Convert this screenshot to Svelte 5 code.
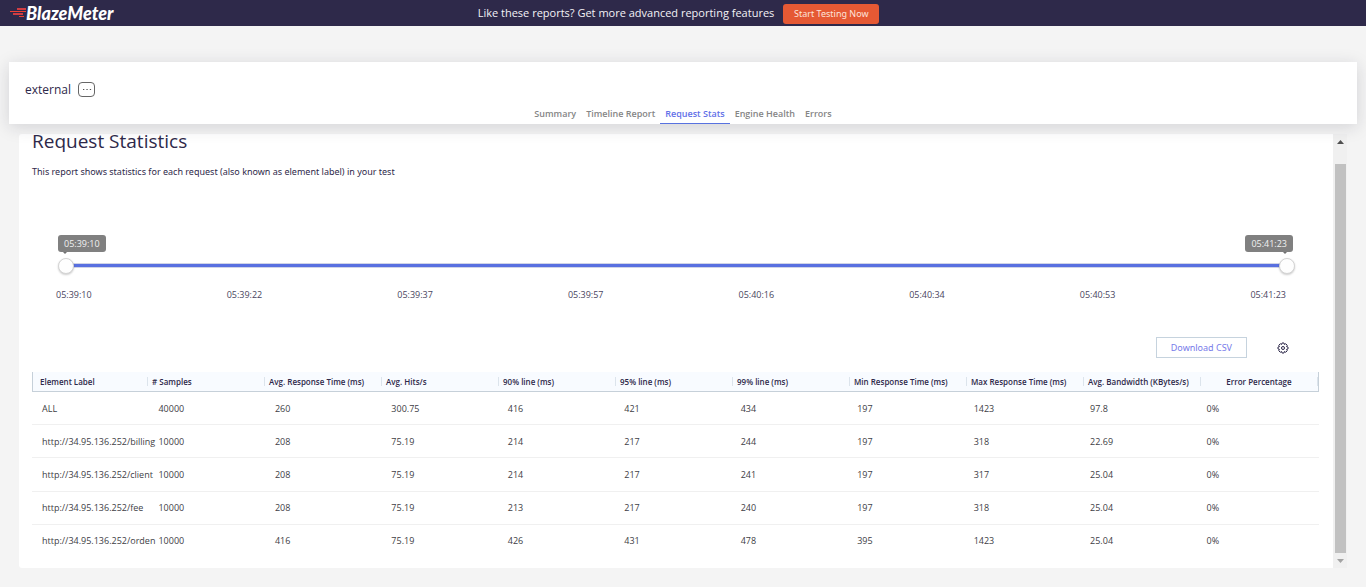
<script>
  const tabs = ['Summary', 'Timeline Report', 'Request Stats', 'Engine Health', 'Errors'];
  let active = $state('Request Stats');

  const times = ['05:39:10', '05:39:22', '05:39:37', '05:39:57', '05:40:16', '05:40:34', '05:40:53', '05:41:23'];
  let from = $state(0);
  let to = $state(133);

  const columns = [
    'Element Label', '# Samples', 'Avg. Response Time (ms)', 'Avg. Hits/s', '90% line (ms)', '95% line (ms)',
    '99% line (ms)', 'Min Response Time (ms)', 'Max Response Time (ms)', 'Avg. Bandwidth (KBytes/s)', 'Error Percentage'
  ];
  const rows = [
    ['ALL', '40000', '260', '300.75', '416', '421', '434', '197', '1423', '97.8', '0%'],
    ['http://34.95.136.252/billing', '10000', '208', '75.19', '214', '217', '244', '197', '318', '22.69', '0%'],
    ['http://34.95.136.252/client', '10000', '208', '75.19', '214', '217', '241', '197', '317', '25.04', '0%'],
    ['http://34.95.136.252/fee', '10000', '208', '75.19', '213', '217', '240', '197', '318', '25.04', '0%'],
    ['http://34.95.136.252/orden', '10000', '416', '75.19', '426', '431', '478', '395', '1423', '25.04', '0%']
  ];
</script>

<header class="topbar">
  <a class="logo" href="#home">
    <svg width="18" height="12" viewBox="0 0 18 12" aria-hidden="true">
      <path d="M7 2h9" />
      <path d="M0 4.500h16" class="thin" />
      <path d="M3 7h10" />
      <path d="M9 9.500h5" class="thin" />
    </svg>
    <span>BlazeMeter</span>
  </a>
  <p>Like these reports? Get more advanced reporting features</p>
  <button class="start">Start Testing Now</button>
</header>

<section class="card">
  <div class="title">
    <span>external</span>
    <button class="more" aria-label="More">
      <svg width="10" height="4" viewBox="0 0 10 4"><path d="M1 1.500h1.300M4.400 1.500h1.300M7.800 1.500h1.300" /></svg>
    </button>
  </div>
  <nav>
    {#each tabs as tab}
      <button class="tab" class:active={tab === active} onclick={() => (active = tab)}>{tab}</button>
    {/each}
  </nav>
</section>

<main>
  <div class="report">
    <h1>Request Statistics</h1>
    <p class="intro">This report shows statistics for each request (also known as element label) in your test</p>

    <div class="slider">
      <div class="tips"><output>05:39:10</output><output>05:41:23</output></div>
      <div class="ranges">
        <div class="track"></div>
        <input type="range" min="0" max="133" bind:value={from} aria-label="Start time" />
        <input type="range" min="0" max="133" bind:value={to} aria-label="End time" />
      </div>
      <div class="times">
        {#each times as time}<span>{time}</span>{/each}
      </div>
    </div>

    <div class="actions">
      <button class="csv">Download CSV</button>
      <button class="gear" aria-label="Table settings">
        <svg width="12" height="12" viewBox="0 0 24 24">
          <path d="M10 2h4l.8 3 2.700-1.500 3 3L19 9.200l3 .8v4l-3 .8 1.500 2.700-3 3-2.700-1.500-.8 3h-4l-.8-3-2.700 1.500-3-3L5 14.800 2 14v-4l3-.8-1.500-2.700 3-3L9.200 5z" />
          <circle cx="12" cy="12" r="3" />
        </svg>
      </button>
    </div>

    <table>
      <thead>
        <tr>{#each columns as column}<th scope="col">{column}</th>{/each}</tr>
      </thead>
      <tbody>
        {#each rows as row}
          <tr>{#each row as cell}<td>{cell}</td>{/each}</tr>
        {/each}
      </tbody>
    </table>
  </div>
  <div class="scrollbar">
    <button aria-label="Scroll up"><svg width="7" height="4" viewBox="0 0 7 4"><path d="M0 4 3.500 0 7 4z" fill="#505050" /></svg></button>
    <div class="thumb"></div>
    <button aria-label="Scroll down"><svg width="7" height="4" viewBox="0 0 7 4"><path d="M0 0h7L3.500 4z" fill="#a3a3a3" /></svg></button>
  </div>
</main>

<style>
  :global(body) {
    background: #f4f4f4;
    color: #2e294a;
    font-family: 'Open Sans', 'Noto Sans', sans-serif;
    font-size: 9px;
  }
  button {
    font: inherit;
    color: inherit;
    padding: 0;
    border: 0;
    background: none;
    cursor: pointer;
  }
  p, h1 { margin: 0; font-weight: 400; }
  svg { display: block; }
  .intro, .start, .csv { font-family: 'Noto Sans', sans-serif; }

  .topbar {
    display: grid;
    grid-template-columns: 1fr auto auto 1fr;
    align-items: center;
    height: 26px;
    padding: 0 19px 0 10px;
    background: #2e294a;
    color: #f3f2f6;
  }
  .topbar p { font-size: 11px; line-height: 26px; }
  .logo {
    display: flex;
    align-items: center;
    color: #fff;
    text-decoration: none;
    font: italic 900 18px/26px Lato, sans-serif;
  }
  .logo svg { stroke: #cf3d43; stroke-width: 2; fill: none; margin-right: -2px; }
  .logo .thin { stroke: #ee4036; stroke-width: 1; }
  .start {
    width: 96px;
    height: 20px;
    margin: 2px 0 0 9px;
    border-radius: 3px;
    background: #e55934;
    color: #fde3da;
    line-height: 20px;
  }

  .card {
    position: relative;
    z-index: 1;
    margin: 36px 9px 0;
    background: #fff;
    box-shadow: 0 3px 16px rgba(30, 30, 50, 0.15);
  }
  .title {
    display: flex;
    align-items: center;
    gap: 7px;
    padding: 18px 16px 0;
    font-size: 12px;
    line-height: 19px;
  }
  .more {
    display: grid;
    place-items: center;
    width: 17px;
    height: 15px;
    border: 1px solid #666;
    border-radius: 4px;
    background: #fff;
  }
  .more svg { stroke: #555; }
  nav { display: flex; justify-content: center; padding-top: 5px; }
  .tab {
    height: 20px;
    padding: 0 5px;
    border-bottom: 1px solid transparent;
    color: #858585;
    font-weight: 600;
    line-height: 19px;
  }
  .tab.active { color: #6270e8; border-color: #5872e0; }

  main { display: flex; margin: 10px 19px 19px; }
  .report {
    flex: 1;
    min-width: 0;
    padding: 0 14px 10px 13px;
    border-radius: 3px 0 0 3px;
    background: #fff;
  }
  h1 { font-size: 19px; line-height: 14px; }
  .intro { margin-top: 16px; line-height: 16px; }

  .slider { padding: 55px 24px 0 26px; }
  .tips { display: flex; justify-content: space-between; padding-right: 2px; }
  output {
    position: relative;
    padding: 0 6px;
    border-radius: 3px;
    background: #808080;
    color: #f1f1f1;
    line-height: 17px;
  }
  output::after {
    content: '';
    position: absolute;
    top: 17px;
    left: 5px;
    border: 2px solid transparent;
    border-top-color: #707070;
  }
  output:last-child::after { left: auto; right: 6px; }
  .ranges {
    display: grid;
    align-items: center;
    margin-top: 6px;
    height: 16px;
  }
  .ranges > * { grid-area: 1 / 1; }
  .track {
    height: 3px;
    margin: 0 8px 1px;
    border: 1px solid #d0d4e6;
    border-width: 1px 0;
    background: #5970e0;
  }
  input {
    appearance: none;
    width: 100%;
    height: 16px;
    margin: 0;
    background: none;
    pointer-events: none;
  }
  input::-webkit-slider-thumb {
    appearance: none;
    box-sizing: border-box;
    width: 16px;
    height: 16px;
    border: 1px solid #d4d4d4;
    border-radius: 50%;
    background: #fefefe;
    box-shadow: 0 1px 2px rgba(0, 0, 0, 0.2);
    pointer-events: auto;
  }
  .times {
    display: flex;
    justify-content: space-between;
    margin: 13px 9px 0 -2px;
    color: #4a4660;
    line-height: 16px;
  }

  .actions {
    display: flex;
    justify-content: flex-end;
    align-items: center;
    gap: 30px;
    padding: 34px 30px 0 0;
  }
  .csv {
    height: 21px;
    padding: 0 14px;
    border: 1px solid #c6d3de;
    color: #777bea;
  }
  .gear svg { fill: none; stroke: #2e294a; stroke-width: 2; }

  table { display: block; margin-top: 14px; }
  thead { display: block; }
  tr { display: grid; grid-template-columns: repeat(11, minmax(0, 1fr)); }
  thead tr {
    grid-template-columns: 115px repeat(10, minmax(0, 1fr));
    border: solid #c6d0d9;
    border-width: 0 1px 1px;
    background: #f8fbff;
  }
  th {
    margin: 5px 0;
    padding: 0 0 0 4px;
    border-right: 1px solid #dce4ec;
    font-size: 8px;
    font-weight: 600;
    line-height: 9px;
    text-align: left;
    white-space: nowrap;
  }
  th:first-child { padding-left: 7px; }
  th:last-child { padding: 0; text-align: center; }
  tbody { display: grid; grid-auto-rows: 1fr; height: 166px; }
  tbody tr {
    align-items: center;
    padding-right: 6px;
    border-bottom: 1px solid #f0f0f0;
  }
  tbody tr:last-child { border-color: transparent; }
  td {
    padding: 0 0 0 10px;
    color: #404045;
    white-space: nowrap;
  }

  .scrollbar {
    display: flex;
    flex-direction: column;
    width: 14px;
    background: #f0f0f0;
  }
  .scrollbar button { display: grid; place-items: center; height: 15px; }
  .thumb { flex: 1; margin: 15px 1px 0 2px; background: #c1c1c1; }
</style>
